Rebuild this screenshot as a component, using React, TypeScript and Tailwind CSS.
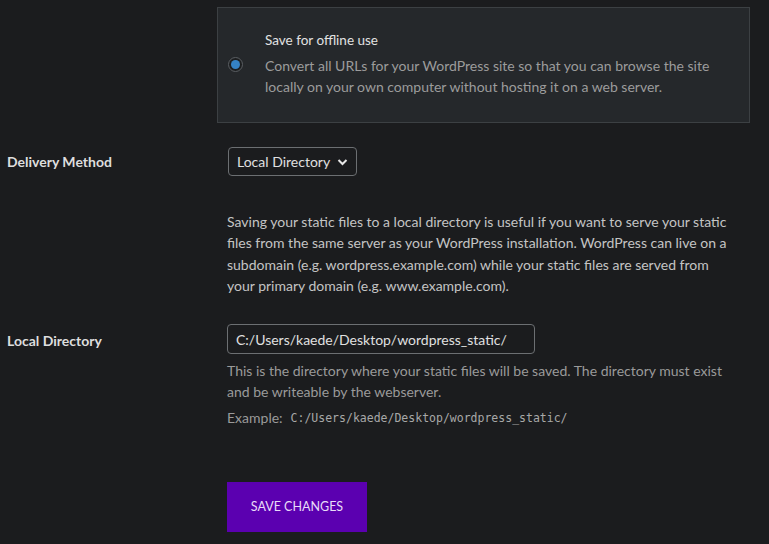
import { FC } from "react";

const font = { fontFamily: 'Lato, "Noto Sans", sans-serif' };

const App: FC = () => {
  return (
    <div
      className="min-h-[544px] w-[769px] bg-[#1b1c1e] text-[#d6d6d6] text-[13px]"
      style={font}
    >
      <div className="pl-[217px] pt-[7px] pr-[19px]">
        <div className="flex items-center border border-[#3c4043] bg-[#25282b] pl-[10px] pr-4 pt-[22px] pb-[25px]">
          <div className="mr-[22px] mt-[1px] flex h-[15px] w-[15px] shrink-0 items-center justify-center rounded-full border border-[#5a5e62] bg-[#1d1f21]">
            <div className="h-[9px] w-[9px] rounded-full bg-[#3582c4]" />
          </div>
          <div>
            <div className="text-[13.5px] leading-[20px] text-[#e2e2e2]">
              Save for offline use
            </div>
            <p className="mt-[5px] text-[14px] leading-[21px] text-[#9c9c9c]">
              Convert all URLs for your WordPress site so that you can browse the site
              <br />
              locally on your own computer without hosting it on a web server.
            </p>
          </div>
        </div>
      </div>

      <div className="mt-[24px] flex items-center">
        <label className="w-[228px] pl-[7px] text-[14px] font-bold text-[#dedede]">
          Delivery Method
        </label>
        <div className="flex h-[29px] items-center gap-[7px] rounded-[4px] border border-[#6c6f72] bg-[#1b1c1e] pl-[8px] pr-[8px] text-[14px] text-[#e0e0e0]">
          Local Directory
          <svg width="11" height="8" viewBox="0 0 11 8" fill="none">
            <path d="M1.5 2L5.5 6L9.5 2" stroke="#e6e6e6" strokeWidth="2" />
          </svg>
        </div>
      </div>

      <p className="mt-[35px] ml-[227px] w-[500px] text-[14px] leading-[21.3px] text-[#c4c4c4]">
        Saving your static files to a local directory is useful if you want to serve your static
        files from the same server as your WordPress installation. WordPress can live on a
        subdomain (e.g. wordpress.example.com) while your static files are served from your
        primary domain (e.g. www.example.com).
      </p>

      <div className="mt-[28px] flex items-start">
        <label className="w-[227px] pl-[7px] pt-[6px] text-[14px] font-bold text-[#dedede]">
          Local Directory
        </label>
        <div>
          <div className="flex h-[30px] w-[308px] items-center rounded-[4px] border border-[#6c6f72] bg-[#1b1c1e] pl-[8px] text-[14px] text-[#e0e0e0]">
            C:/Users/kaede/Desktop/wordpress_static/
          </div>
          <p className="mt-[6px] w-[510px] text-[14px] leading-[21px] text-[#9a9a9a]">
            This is the directory where your static files will be saved. The directory must exist
            and be writeable by the webserver.
          </p>
          <p className="mt-[6px] flex items-center text-[14px] leading-[20px] text-[#9a9a9a]">
            Example:
            <code
              className="ml-[8px] text-[11.5px] text-[#a8a8a8]"
              style={{ fontFamily: '"DejaVu Sans Mono", "Liberation Mono", monospace' }}
            >
              C:/Users/kaede/Desktop/wordpress_static/
            </code>
          </p>
        </div>
      </div>

      <div className="mt-[54px] pl-[227px]">
        <button className="h-[50px] w-[140px] bg-[#5b00b0] text-[12.5px] text-[#e8dcf8]">
          SAVE CHANGES
        </button>
      </div>
    </div>
  );
};

export default App;
